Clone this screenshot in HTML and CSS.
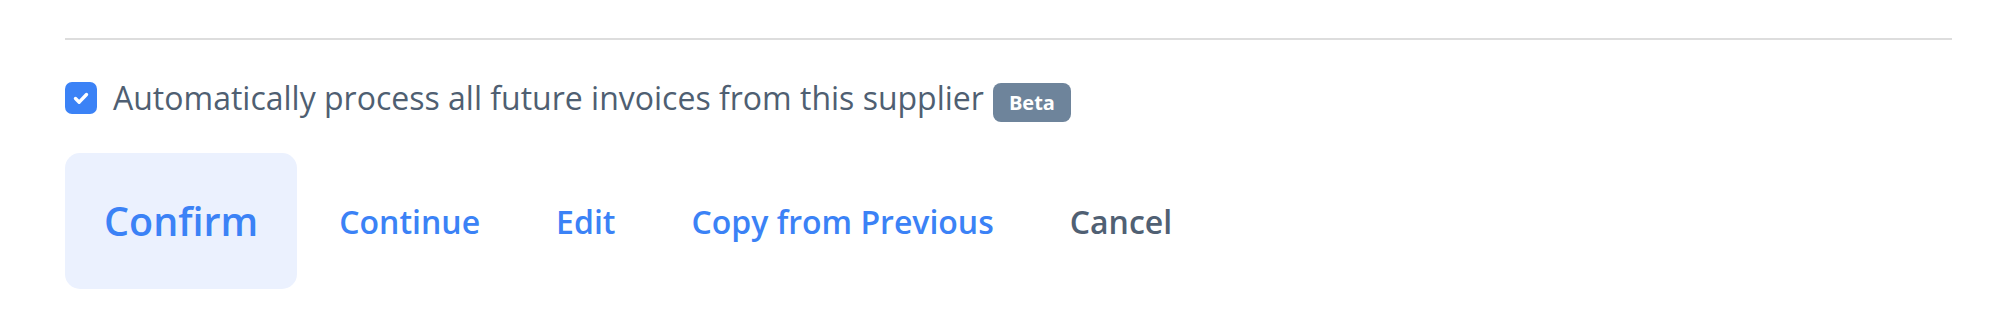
FILE: index.html
```html
<!DOCTYPE html>
<html>
<head>
<meta charset="utf-8">
<link rel="stylesheet" href="styles.css">
</head>
<body>
<div class="panel">
  <div class="divider"></div>
  <label class="auto-row">
    <span class="checkbox">
      <svg viewBox="0 0 32 32" width="32" height="32"><path d="M10.5 16.5 L14.2 20.2 L21.5 12.5" fill="none" stroke="#fff" stroke-width="3.4" stroke-linecap="round" stroke-linejoin="round"/></svg>
    </span>
    <span class="label-text">Automatically process all future invoices from this supplier</span>
    <span class="badge">Beta</span>
  </label>
  <div class="actions">
    <button class="btn btn-primary">Confirm</button>
    <button class="btn btn-link">Continue</button>
    <button class="btn btn-link">Edit</button>
    <button class="btn btn-link">Copy from Previous</button>
    <button class="btn btn-link btn-muted">Cancel</button>
  </div>
</div>
</body>
</html>
```

FILE: styles.css
```css
html, body {
  margin: 0;
  padding: 0;
  background: #ffffff;
}
body {
  font-family: "Open Sans", "Noto Sans", sans-serif;
}
.panel {
  padding: 38px 48px 0 65px;
}
.divider {
  height: 2px;
  background: #dddddd;
}
.auto-row {
  display: flex;
  align-items: center;
  margin-top: 42px;
  height: 32px;
}
.checkbox {
  width: 32px;
  height: 32px;
  border-radius: 7px;
  background: #3b82f6;
  display: flex;
  flex-shrink: 0;
}
.label-text {
  margin-left: 16px;
  font-size: 32px;
  color: #4f5f72;
  line-height: 32px;
  white-space: nowrap;
}
.badge {
  margin-left: 9px;
  margin-top: 8px;
  height: 39px;
  box-sizing: border-box;
  padding: 0 16px;
  border-radius: 8px;
  background: #6e849b;
  color: #ffffff;
  font-weight: 700;
  font-size: 20px;
  display: flex;
  align-items: center;
}
.actions {
  display: flex;
  align-items: center;
  margin-top: 39px;
}
.btn {
  height: 136px;
  padding: 0 38px;
  border: none;
  border-radius: 15px;
  background: transparent;
  font-family: "Open Sans", "Noto Sans", sans-serif;
  font-weight: 600;
  font-size: 32px;
  color: #3b82f6;
  cursor: pointer;
}
.btn-primary {
  background: #ebf1fe;
  font-size: 39.5px;
  padding: 0 39px;
  margin-right: 4px;
}
.btn-muted {
  color: #506073;
}
```
